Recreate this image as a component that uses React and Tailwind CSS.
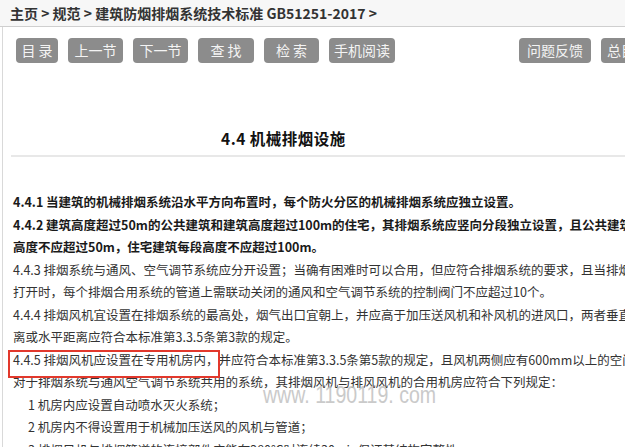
const buttons = [
  { label: "目 录", w: "w-[42px]" },
  { label: "上一节", w: "w-[55px]" },
  { label: "下一节", w: "w-[55px]" },
  { label: "查 找", w: "w-[56px]" },
  { label: "检 索", w: "w-[55px]" },
  { label: "手机阅读", w: "w-[66px]" },
];

const lines = [
  { text: "4.4.1 当建筑的机械排烟系统沿水平方向布置时，每个防火分区的机械排烟系统应独立设置。", bold: true },
  { text: "4.4.2 建筑高度超过50m的公共建筑和建筑高度超过100m的住宅，其排烟系统应竖向分段独立设置，且公共建筑每段", bold: true },
  { text: "高度不应超过50m，住宅建筑每段高度不应超过100m。", bold: true },
  { text: "4.4.3 排烟系统与通风、空气调节系统应分开设置；当确有困难时可以合用，但应符合排烟系统的要求，且当排烟口" },
  { text: "打开时，每个排烟合用系统的管道上需联动关闭的通风和空气调节系统的控制阀门不应超过10个。" },
  { text: "4.4.4 排烟风机宜设置在排烟系统的最高处，烟气出口宜朝上，并应高于加压送风机和补风机的进风口，两者垂直距" },
  { text: "离或水平距离应符合本标准第3.3.5条第3款的规定。" },
];

const after = [
  { text: "对于排烟系统与通风空气调节系统共用的系统，其排烟风机与排风风机的合用机房应符合下列规定：" },
  { text: "1 机房内应设置自动喷水灭火系统；", indent: true },
  { text: "2 机房内不得设置用于机械加压送风的风机与管道；", indent: true },
  { text: "3 排烟风机与排烟管道的连接部件应能在280℃时连续30min保证其结构完整性。", indent: true },
];

const Line = ({ text, bold, indent }) => (
  <div
    className={`whitespace-nowrap ${bold ? "font-bold text-[#1a1a1a]" : "text-[#333]"} ${indent ? "pl-[15px]" : ""}`}
  >
    {text}
  </div>
);

export default function App() {
  return (
    <div className="relative w-[625px] h-[447px] overflow-hidden bg-white font-['Noto_Sans_CJK_SC','Microsoft_YaHei',sans-serif]">
      {/* BREADCRUMB */}
      <div className="h-[27px] bg-[#f7f7f7] border-b border-[#cfcfcf] pl-[10px] flex items-center text-[14px] font-bold text-[#333] whitespace-nowrap">
        主页 &gt; 规范 &gt; 建筑防烟排烟系统技术标准 GB51251-2017 &gt;
      </div>

      <div className="ml-[2px] border-l border-[#d9d9d9] h-[420px]">
        {/* TOOLBAR */}
        <div className="pt-[11px] pl-[13px] flex whitespace-nowrap">
          <div className="flex gap-[10px]">
            {buttons.map((b) => (
              <div
                key={b.label}
                className={`${b.w} h-[25px] rounded-[4px] bg-[#8c8c8c] text-[#f4f4f4] text-[14px] flex items-center justify-center`}
              >
                {b.label}
              </div>
            ))}
          </div>
          <div className="ml-[124px] flex gap-[10px]">
            <div className="w-[72px] h-[25px] rounded-[4px] bg-[#8c8c8c] text-[#f4f4f4] text-[14px] flex items-center justify-center">
              问题反馈
            </div>
            <div className="w-[60px] h-[25px] rounded-[4px] bg-[#8c8c8c] text-[#f4f4f4] text-[14px] flex items-center pl-[6px]">
              总目录
            </div>
          </div>
        </div>

        {/* TITLE */}
        <div className="mt-[65px] ml-[8px] border-b-2 border-[#e8e8e8] pb-[7px]">
          <div className="pl-[210px] h-[20px] leading-[20px] text-[15.5px] font-bold text-[#111] tracking-[0.5px] whitespace-nowrap">
            4.4 机械排烟设施
          </div>
        </div>

        {/* CONTENT */}
        <div className="mt-[34px] pl-[10px] text-[12.5px] leading-[22.5px]">
          {lines.map((l, i) => (
            <Line key={i} {...l} />
          ))}
          <div className="whitespace-nowrap text-[#333]">
            <span className="relative">
              4.4.5 排烟风机应设置在专用机房内，
              <span className="absolute left-[-5px] right-[-1px] top-[0px] bottom-[-9px] border-2 border-[#e2382c]"></span>
            </span>
            并应符合本标准第3.3.5条第5款的规定，且风机两侧应有600mm以上的空间。
          </div>
          {after.map((l, i) => (
            <Line key={i} {...l} />
          ))}
        </div>
      </div>

      {/* WATERMARK */}
      <div className="absolute left-[263px] top-[382px] text-[23px] leading-[26px] text-[#bdbdbd] opacity-80 font-['Liberation_Sans',sans-serif] whitespace-nowrap origin-left scale-x-[0.85]">
        www. 1190119. com
      </div>
    </div>
  );
}
